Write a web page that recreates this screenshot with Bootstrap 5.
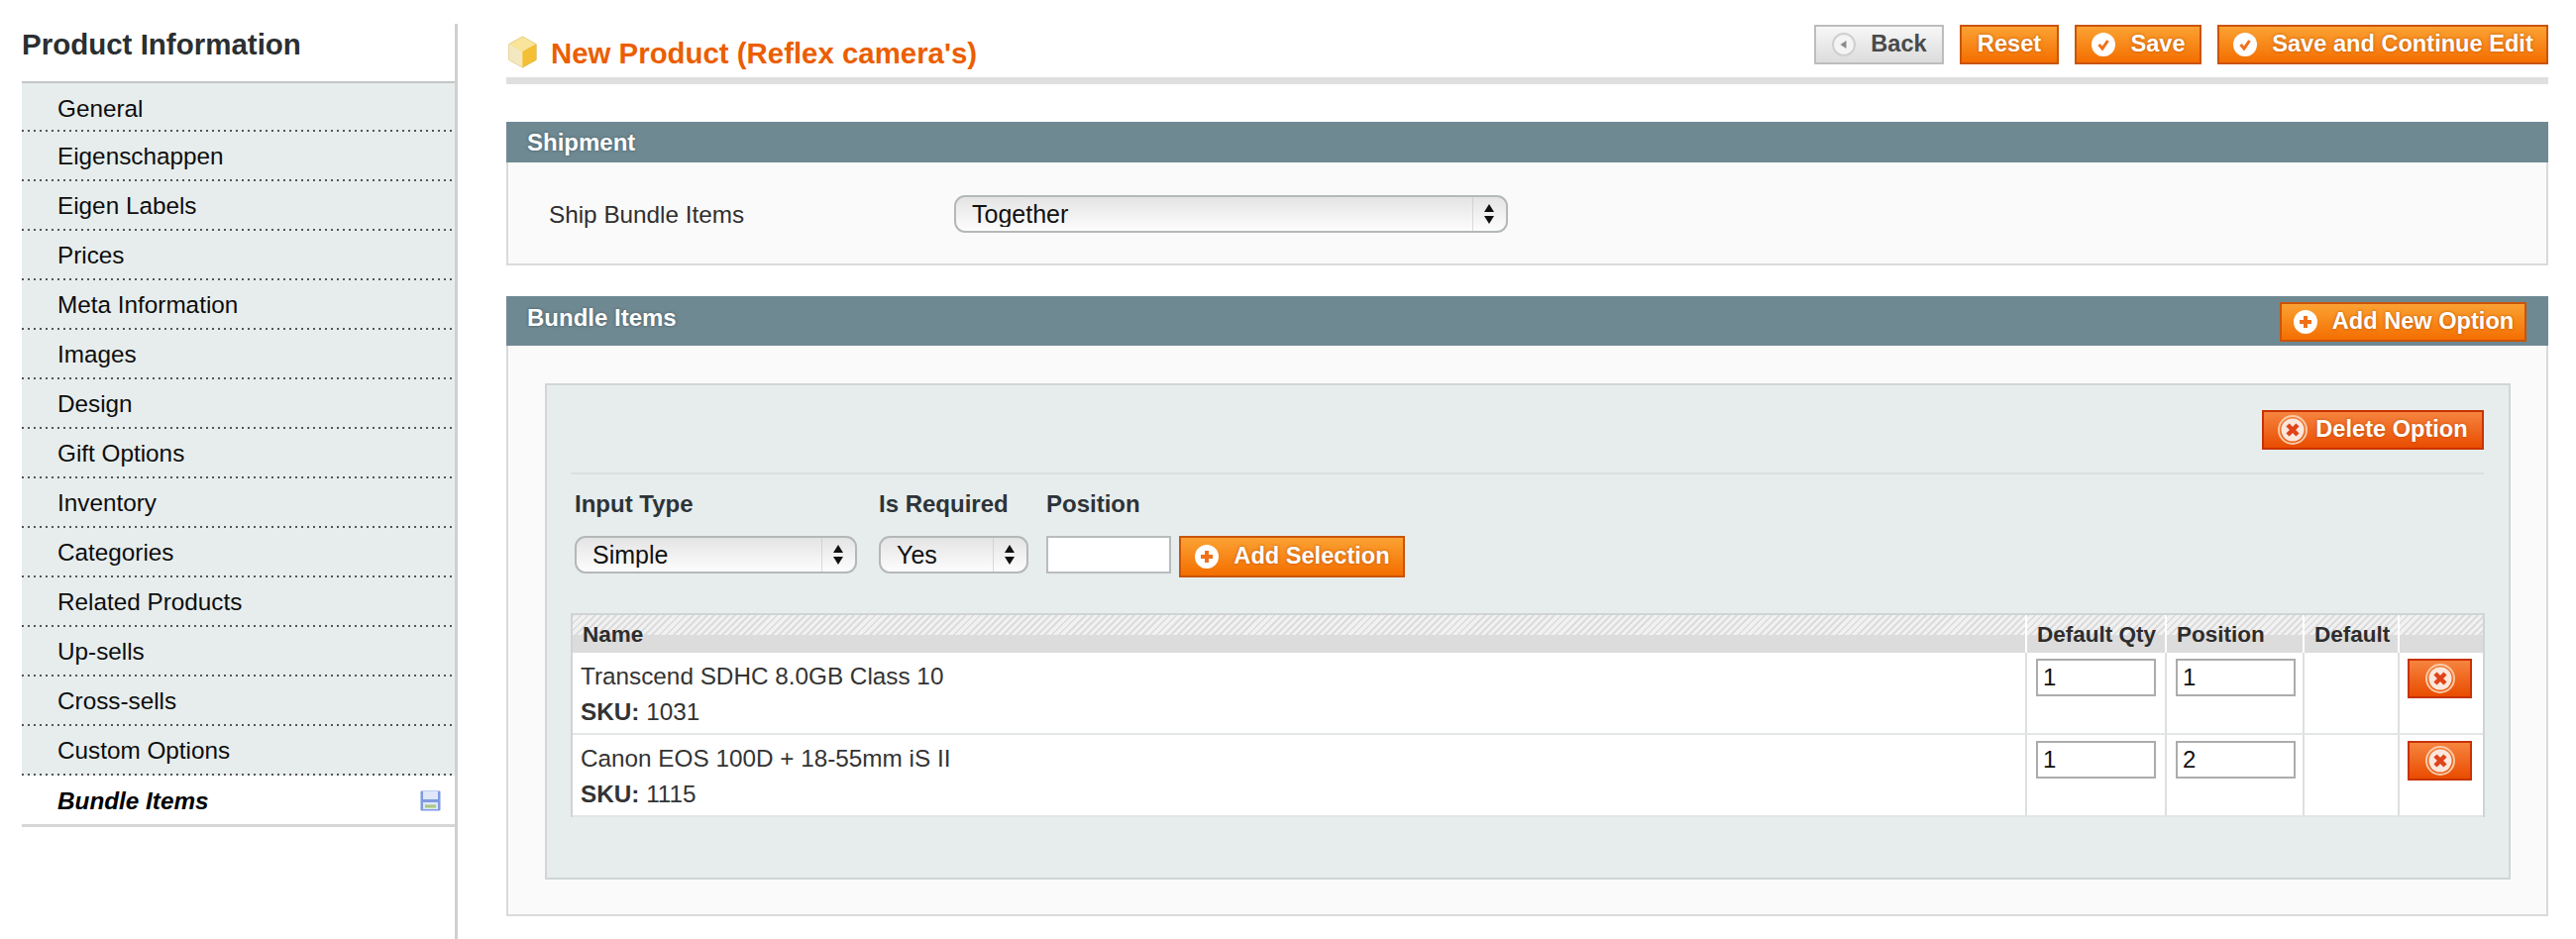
<!DOCTYPE html>
<html lang="en">
<head>
<meta charset="utf-8">
<title>New Product</title>
<link href="https://cdn.jsdelivr.net/npm/bootstrap@5.3.0/dist/css/bootstrap.min.css" rel="stylesheet">
<style>
body{font-family:"Liberation Sans",Arial,sans-serif;font-size:24.3px;color:#2f2f2f;background:#fff;line-height:1.25}
.page-wrap{height:948px;overflow:hidden;padding:24px 28px 0 22px}
.side-col{width:440px;height:924px;border-right:3px solid #cfcfcf;flex:none}
.side-title{font-size:29.5px;font-weight:700;height:60px;padding-top:4px;line-height:34px;color:#2b2f31;border-bottom:2px solid #c3c7c7}
.side-nav{list-style:none;margin:0;padding:0}
.side-nav li{height:50px;background:#e7eded repeating-linear-gradient(90deg,#555 0 2px,transparent 2px 6px) bottom/100% 2px no-repeat;padding:7px 14px 0 36px;line-height:36px;color:#0d0d0d;white-space:nowrap}
.side-nav li:first-child{height:49px;padding-top:8px}
.side-nav li.is-active{background:#fff;border-bottom:3px solid #d6d6d6;height:52px;font-weight:700;font-style:italic;color:#000;display:flex;justify-content:space-between;align-items:center;padding-top:2px}
.main-col{width:2061px;margin-left:49px;flex:none;padding-top:1px}
.head-row{height:53px;border-bottom:7px solid #dfdfdf;box-sizing:content-box;margin-bottom:38px}
.head-row h1{font-size:29.4px;font-weight:700;color:#eb5e00;margin:0;line-height:36px;padding-top:8px;display:flex;gap:13px;align-items:center;height:50px;white-space:nowrap}
.head-row h1 svg{margin-top:-3px;margin-left:1px}
.mage-btn{--bs-btn-padding-y:0;--bs-btn-padding-x:0;--bs-btn-border-radius:0;--bs-btn-border-width:2px;--bs-btn-font-size:23.6px;--bs-btn-font-weight:700;--bs-btn-line-height:1;height:40px;display:inline-flex;align-items:center;justify-content:center;gap:14px;color:#fff;background:linear-gradient(#fba233,#f46e00);border:2px solid #c9550a;text-shadow:0 0 3px rgba(170,70,0,.8);white-space:nowrap}
.mage-btn:hover{color:#fff;background:linear-gradient(#fba233,#f46e00);border-color:#c9550a}
.mage-btn.tone-grey{color:#4a4a4a;background:linear-gradient(#f7f7f7,#dcdcdc);border-color:#bdbdbd;text-shadow:none}
.mage-btn.tone-red{background:linear-gradient(#f6843f,#e94c00);border-color:#c83200;gap:8px}
.w-back{width:131px}.w-reset{width:100px}.w-save{width:128px}.w-cont{width:334px}
.w-addopt{width:249px}.w-del{width:224px;height:40px}.w-addsel{width:228px;height:42px}.w-rm{width:65px}
.btn-set{gap:16px}
.panel-head{background:#6f8992;color:#fff;font-weight:700;font-size:24px;padding-left:21px;text-shadow:0 0 3px rgba(40,60,70,.7)}
.panel-head.tall{height:50px;padding-right:22px;padding-top:2px}
.panel-head.tall>span{margin-bottom:8px}
.panel-head.short{height:41px}
.panel-body-a{background:#fafafa;border:2px solid #dadada;border-top:0;height:104px;padding:0 0 0 41px;margin-bottom:31px}
.ship-label{width:409px;padding-top:5px}
.panel-body-b{background:#fafafa;border:2px solid #dadada;border-top:0;height:576px;padding:38px 36px 0 37px}
.mage-select{height:38px;border:2px solid #b4b8b8;border-radius:11px;padding:0 0 0 16px;font-size:25px;line-height:1;color:#111;font-family:inherit;box-shadow:none;
background:url("data:image/svg+xml,%3Csvg xmlns='http://www.w3.org/2000/svg' width='34' height='34'%3E%3Cpath d='M0 0v34' stroke='%23bbb'/%3E%3Cpath d='M17 7l5 8H12zM17 27l-5-8h10z' fill='%23111'/%3E%3C/svg%3E") no-repeat right center/34px 34px,linear-gradient(#e4e4e4,#fdfdfd)}
.sel-ship{width:559px;margin-top:2px}
.sel-type{width:285px}.sel-req{width:151px}
.opt-box{background:#e7eded;border:2px solid #d0d6d6;height:501px;padding:0 25px 0 24px}
.opt-top{height:90px;border-bottom:2px solid #dadfdf;padding-top:25px}
.opt-form{margin-top:14px;height:126px;padding-left:4px}
.opt-form label{display:block;font-weight:700;font-size:24px;line-height:30px;height:48px;padding-top:1px;color:#2d3338;margin:0}
.ci-1{width:307px}.ci-2{width:169px}.ci-3{width:134px}
.addsel-wrap{padding-top:48px}
.pos-input{height:38px;width:126px;border-radius:0;border:2px solid #b9bcbc;padding:0 10px;font-size:24px;color:#111}
.item-grid{--bs-table-bg:transparent;width:1932px;margin:0;table-layout:fixed;border-collapse:separate;border-spacing:0;background:#fff;border:solid #cfd4d4;border-width:2px 2px 0 2px;font-size:24.3px}
.item-grid th{height:38px;padding:0 0 0 10px;font-weight:700;font-size:22.5px;line-height:36px;color:#2d2d2d;border:0;border-right:2px solid #fff;background:repeating-linear-gradient(135deg,#dcdcdc 0 2px,#f1f1f1 2px 5px) top/100% 20px no-repeat,#dcdcdc;vertical-align:bottom}
.item-grid td{padding:0;border:0;border-right:2px solid #dde0e0;border-bottom:2px solid #e3e6e6;vertical-align:top;height:83px;color:#333;background:#fff}
.item-grid td:last-child,.item-grid th:last-child{border-right:0}
.item-grid td.cell-name{padding:6px 0 0 8px;line-height:36px}
.item-grid td.cell-in{padding:6px 0 0 9px}
.item-grid td.cell-rm{padding:6px 0 0 8px}
.qty-input{width:121px;height:38px;border-radius:0;border:2px solid #acacac;padding:0 5px;font-size:24px;color:#111}
.c-name{width:1468px}.c-a{width:141px}.c-b{width:139px}.c-c{width:96px}
.mage-ico{flex:none}
</style>
</head>
<body>
<svg width="0" height="0" class="position-absolute">
<defs>
<symbol id="i-check" viewBox="0 0 26 26"><circle cx="13" cy="13" r="12" fill="#fff"/><path d="M8.500 13l3.500 4 5.500-8" fill="none" stroke="#f0701a" stroke-width="3"/></symbol>
<symbol id="i-plus" viewBox="0 0 26 26"><circle cx="13" cy="13" r="12" fill="#fff"/><path d="M13 7v12M7 13h12" fill="none" stroke="#f0701a" stroke-width="4"/></symbol>
<symbol id="i-x" viewBox="0 0 30 30"><circle cx="15" cy="15" r="14" fill="none" stroke="#f8c9a8" stroke-width="2"/><circle cx="15" cy="15" r="11.500" fill="#fbe7dc"/><path d="M10 10l10 10M20 10L10 20" fill="none" stroke="#e0431a" stroke-width="4.500"/></symbol>
<symbol id="i-back" viewBox="0 0 26 26"><circle cx="13" cy="13" r="11" fill="#f4f4f4" stroke="#cfcfcf" stroke-width="2"/><path d="M15.500 9v8l-6-4z" fill="#8a8a8a"/></symbol>
</defs>
</svg>
<div class="page-wrap d-flex">
  <aside class="side-col">
    <div class="side-title">Product Information</div>
    <ul class="side-nav">
      <li>General</li><li>Eigenschappen</li><li>Eigen Labels</li><li>Prices</li><li>Meta Information</li><li>Images</li><li>Design</li><li>Gift Options</li><li>Inventory</li><li>Categories</li><li>Related Products</li><li>Up-sells</li><li>Cross-sells</li><li>Custom Options</li>
      <li class="is-active"><span>Bundle Items</span>
        <svg width="21" height="21" viewBox="0 0 21 21"><rect x=".5" y=".5" width="20" height="20" rx="1" fill="#7f9ae0"/><rect x="3" y="1" width="15" height="8" fill="#dfe7f8"/><rect x="3" y="12" width="15" height="7" fill="#dfe7f8"/><rect x="5" y="14.500" width="11" height="3" fill="#a8c878"/></svg>
      </li>
    </ul>
  </aside>
  <main class="main-col">
    <div class="head-row d-flex justify-content-between">
      <h1>
        <svg width="31" height="33" viewBox="0 0 33 35"><path d="M16.500 1L31 9v17l-14.500 8L2 26V9z" fill="#f5d56a" stroke="#d9b75a"/><path d="M16.500 1L31 9l-14.500 8L2 9z" fill="#f8e49a"/><path d="M16.500 17v17L2 26V9z" fill="#f3e8c0"/><path d="M16.500 17L31 9v17l-14.500 8z" fill="#f2bf35"/></svg>
        New Product (Reflex camera's)
      </h1>
      <div class="d-flex btn-set align-items-start">
        <button type="button" class="btn mage-btn tone-grey w-back"><svg class="mage-ico" width="26" height="26"><use href="#i-back"/></svg>Back</button>
        <button type="button" class="btn mage-btn w-reset">Reset</button>
        <button type="button" class="btn mage-btn w-save"><svg class="mage-ico" width="26" height="26"><use href="#i-check"/></svg>Save</button>
        <button type="button" class="btn mage-btn w-cont"><svg class="mage-ico" width="26" height="26"><use href="#i-check"/></svg>Save and Continue Edit</button>
      </div>
    </div>

    <div class="panel-head short d-flex align-items-center">Shipment</div>
    <div class="panel-body-a d-flex align-items-center">
      <div class="ship-label">Ship Bundle Items</div>
      <select class="form-select mage-select sel-ship"><option>Together</option></select>
    </div>

    <div class="panel-head tall d-flex justify-content-between align-items-center">
      <span>Bundle Items</span>
      <button type="button" class="btn mage-btn w-addopt"><svg class="mage-ico" width="26" height="26"><use href="#i-plus"/></svg>Add New Option</button>
    </div>
    <div class="panel-body-b">
      <div class="opt-box">
        <div class="opt-top d-flex justify-content-end">
          <button type="button" class="btn mage-btn tone-red w-del"><svg class="mage-ico" width="30" height="30"><use href="#i-x"/></svg>Delete Option</button>
        </div>
        <div class="opt-form d-flex align-items-start">
          <div class="ci-1"><label for="f-type">Input Type</label><select id="f-type" class="form-select mage-select sel-type"><option>Simple</option></select></div>
          <div class="ci-2"><label for="f-req">Is Required</label><select id="f-req" class="form-select mage-select sel-req"><option>Yes</option></select></div>
          <div class="ci-3"><label for="f-pos">Position</label><input id="f-pos" class="form-control pos-input" type="text"></div>
          <div class="addsel-wrap"><button type="button" class="btn mage-btn w-addsel"><svg class="mage-ico" width="26" height="26"><use href="#i-plus"/></svg>Add Selection</button></div>
        </div>
        <table class="table item-grid">
          <colgroup><col class="c-name"><col class="c-a"><col class="c-b"><col class="c-c"><col></colgroup>
          <thead><tr><th>Name</th><th>Default Qty</th><th>Position</th><th>Default</th><th></th></tr></thead>
          <tbody>
            <tr>
              <td class="cell-name">Transcend SDHC 8.0GB Class 10<br><b>SKU:</b> 1031</td>
              <td class="cell-in"><input class="form-control qty-input" type="text" value="1"></td>
              <td class="cell-in"><input class="form-control qty-input" type="text" value="1"></td>
              <td></td>
              <td class="cell-rm"><button type="button" class="btn mage-btn tone-red w-rm"><svg class="mage-ico" width="30" height="30"><use href="#i-x"/></svg></button></td>
            </tr>
            <tr>
              <td class="cell-name">Canon EOS 100D + 18-55mm iS II<br><b>SKU:</b> 1115</td>
              <td class="cell-in"><input class="form-control qty-input" type="text" value="1"></td>
              <td class="cell-in"><input class="form-control qty-input" type="text" value="2"></td>
              <td></td>
              <td class="cell-rm"><button type="button" class="btn mage-btn tone-red w-rm"><svg class="mage-ico" width="30" height="30"><use href="#i-x"/></svg></button></td>
            </tr>
          </tbody>
        </table>
      </div>
    </div>
  </main>
</div>
</body>
</html>
